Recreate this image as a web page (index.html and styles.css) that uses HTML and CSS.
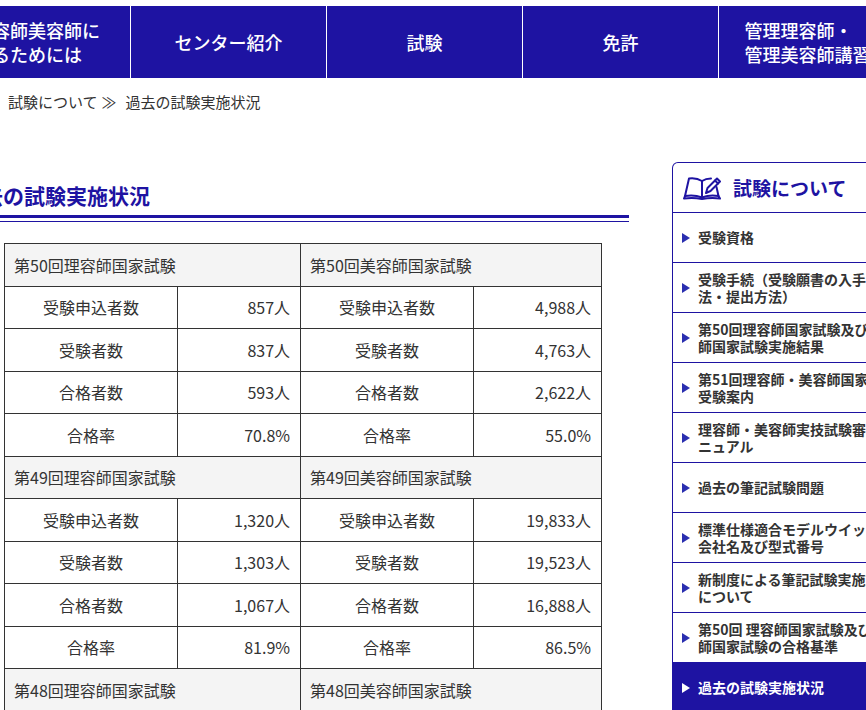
FILE: index.html
```html
<!DOCTYPE html>
<html lang="ja">
<head>
<meta charset="utf-8">
<title>過去の試験実施状況</title>
<link rel="stylesheet" href="styles.css">
</head>
<body>
<div class="page">
  <nav class="gnav">
    <a class="gnav-item gnav-first"><span>理容師美容師に<br>なるためには</span></a>
    <a class="gnav-item"><span>センター紹介</span></a>
    <a class="gnav-item"><span>試験</span></a>
    <a class="gnav-item"><span>免許</span></a>
    <a class="gnav-item"><span>管理理容師・<br>管理美容師講習会</span></a>
  </nav>

  <div class="crumb"><span>試験について</span><span class="sep">≫</span><span>過去の試験実施状況</span></div>

  <div class="content">
    <main class="main">
      <div class="title"><h1>過去の試験実施状況</h1></div>
      <table class="results">
        <colgroup>
          <col class="c-label"><col class="c-val"><col class="c-label"><col class="c-val2">
        </colgroup>
        <tbody>
          <tr class="head"><td colspan="2">第50回理容師国家試験</td><td colspan="2">第50回美容師国家試験</td></tr>
          <tr><td class="lbl">受験申込者数</td><td class="num">857人</td><td class="lbl">受験申込者数</td><td class="num">4,988人</td></tr>
          <tr><td class="lbl">受験者数</td><td class="num">837人</td><td class="lbl">受験者数</td><td class="num">4,763人</td></tr>
          <tr><td class="lbl">合格者数</td><td class="num">593人</td><td class="lbl">合格者数</td><td class="num">2,622人</td></tr>
          <tr><td class="lbl">合格率</td><td class="num">70.8%</td><td class="lbl">合格率</td><td class="num">55.0%</td></tr>
          <tr class="head"><td colspan="2">第49回理容師国家試験</td><td colspan="2">第49回美容師国家試験</td></tr>
          <tr><td class="lbl">受験申込者数</td><td class="num">1,320人</td><td class="lbl">受験申込者数</td><td class="num">19,833人</td></tr>
          <tr><td class="lbl">受験者数</td><td class="num">1,303人</td><td class="lbl">受験者数</td><td class="num">19,523人</td></tr>
          <tr><td class="lbl">合格者数</td><td class="num">1,067人</td><td class="lbl">合格者数</td><td class="num">16,888人</td></tr>
          <tr><td class="lbl">合格率</td><td class="num">81.9%</td><td class="lbl">合格率</td><td class="num">86.5%</td></tr>
          <tr class="head"><td colspan="2">第48回理容師国家試験</td><td colspan="2">第48回美容師国家試験</td></tr>
        </tbody>
      </table>
    </main>

    <aside class="side">
      <div class="side-head">
        <svg class="book" viewBox="0 0 38 24" width="38" height="24" fill="none" stroke="#1e13a2" stroke-width="2" stroke-linejoin="round" stroke-linecap="round">
          <path d="M19 5 C15 2.5 10 2 6 2.5 L2 20 C8 19 14 19.5 19 21.5 Z"/>
          <path d="M19 5 C22 3 25 2.5 28 2.5"/>
          <path d="M33.5 11 L35.5 20 C30 19 24 19.5 19 21.5"/>
          <path d="M19 5 V21.5"/>
          <path d="M2 20 L1 22.5 C8 21.5 14 22 19 23 C24 22 30 21.5 37 22.5 L35.5 20"/>
          <path d="M23 17 L24.5 12 L34 2.5 L37 5.5 L27.5 15 Z"/>
          <path d="M32 4.5 L35 7.5"/>
        </svg>
        <span class="side-title">試験について</span>
      </div>
      <ul class="side-list">
        <li class="side-item"><span class="tri"></span><span class="txt">受験資格</span></li>
        <li class="side-item"><span class="tri"></span><span class="txt">受験手続（受験願書の入手方<br>法・提出方法）</span></li>
        <li class="side-item"><span class="tri"></span><span class="txt">第50回理容師国家試験及び美容<br>師国家試験実施結果</span></li>
        <li class="side-item"><span class="tri"></span><span class="txt">第51回理容師・美容師国家試験<br>受験案内</span></li>
        <li class="side-item"><span class="tri"></span><span class="txt">理容師・美容師実技試験審査マ<br>ニュアル</span></li>
        <li class="side-item"><span class="tri"></span><span class="txt">過去の筆記試験問題</span></li>
        <li class="side-item"><span class="tri"></span><span class="txt">標準仕様適合モデルウイッグの<br>会社名及び型式番号</span></li>
        <li class="side-item"><span class="tri"></span><span class="txt">新制度による筆記試験実施方法<br>について</span></li>
        <li class="side-item"><span class="tri"></span><span class="txt">第50回 理容師国家試験及び美容<br>師国家試験の合格基準</span></li>
        <li class="side-item active"><span class="tri"></span><span class="txt">過去の試験実施状況</span></li>
      </ul>
    </aside>
  </div>
</div>
</body>
</html>
```

FILE: styles.css
```css
html, body {
  margin: 0;
  padding: 0;
}

body {
  width: 866px;
  height: 710px;
  overflow: hidden;
  background: #fff;
  color: #333;
  font-family: "Noto Sans CJK JP", "Noto Sans", sans-serif;
}

.page {
  padding-top: 6px;
}

/* global nav */
.gnav {
  display: flex;
  gap: 1px;
  margin-left: -56px;
  width: 1000px;
}

.gnav-item {
  flex: 0 0 195px;
  height: 72px;
  background: #1e13a2;
  color: #fff;
  display: flex;
  align-items: center;
  justify-content: center;
  font-size: 18px;
  font-weight: 500;
  line-height: 24px;
  text-decoration: none;
}

.gnav-first {
  flex-basis: 186px;
}

.gnav-item span {
  text-align: left;
}

/* breadcrumb */
.crumb {
  font-size: 15px;
  line-height: 20px;
  padding: 14px 0 0 8px;
  color: #333;
}

.crumb .sep {
  margin: 0 9px 0 4px;
}

/* content */
.content {
  display: flex;
  align-items: flex-start;
  margin-top: 50px;
}

.main {
  flex: 0 0 669px;
  margin-left: -40px;
  padding-top: 18px;
}

.title {
  border-bottom: 1px solid #1e13a2;
  padding-bottom: 3px;
}

.title h1 {
  margin: 0;
  padding: 0 0 5px 1px;
  font-size: 21px;
  line-height: 30px;
  font-weight: 700;
  color: #1e13a2;
  border-bottom: 3px solid #1e13a2;
}

/* table */
.results {
  border-collapse: collapse;
  width: 597px;
  margin: 21px 0 0 44px;
  font-size: 16px;
  color: #333;
  table-layout: fixed;
}

.c-label { width: 173px; }
.c-val { width: 123px; }
.c-val2 { width: 128px; }

.results tr {
  height: 42.5px;
}

.results td {
  border: 1px solid #333;
  padding: 0 10px;
  line-height: 22px;
}

.results tr.head td {
  background: #f4f4f4;
  text-align: left;
  padding-left: 9px;
}

.results td.lbl {
  text-align: center;
}

.results td.num {
  text-align: right;
}

/* sidebar */
.side {
  flex: 0 0 250px;
  margin-left: 43px;
  border: 1px solid #1e13a2;
  border-bottom: none;
  border-radius: 6px 0 0 0;
}

.side-head {
  height: 49px;
  display: flex;
  align-items: center;
  padding-left: 10px;
  border-bottom: 1px solid #1e13a2;
}

.book {
  display: block;
  flex: 0 0 auto;
  margin-top: 1px;
}

.side-title {
  margin-left: 12px;
  font-size: 19px;
  font-weight: 700;
  color: #1e13a2;
  line-height: 24px;
}

.side-list {
  list-style: none;
  margin: 0;
  padding: 0;
}

.side-item {
  height: 49px;
  border-bottom: 1px solid #1e13a2;
  display: flex;
  align-items: center;
  padding-left: 9px;
  font-size: 14px;
  font-weight: 700;
  line-height: 17px;
  color: #333;
  white-space: nowrap;
}

.side-item .tri {
  flex: 0 0 auto;
  width: 0;
  height: 0;
  border-left: 8px solid #2a2fb0;
  border-top: 5px solid transparent;
  border-bottom: 5px solid transparent;
  margin-right: 8px;
}

.side-item .txt {
  display: block;
}

.side-item.active {
  background: #1e13a2;
  color: #fff;
}

.side-item.active .tri {
  border-left-color: #fff;
}
```
